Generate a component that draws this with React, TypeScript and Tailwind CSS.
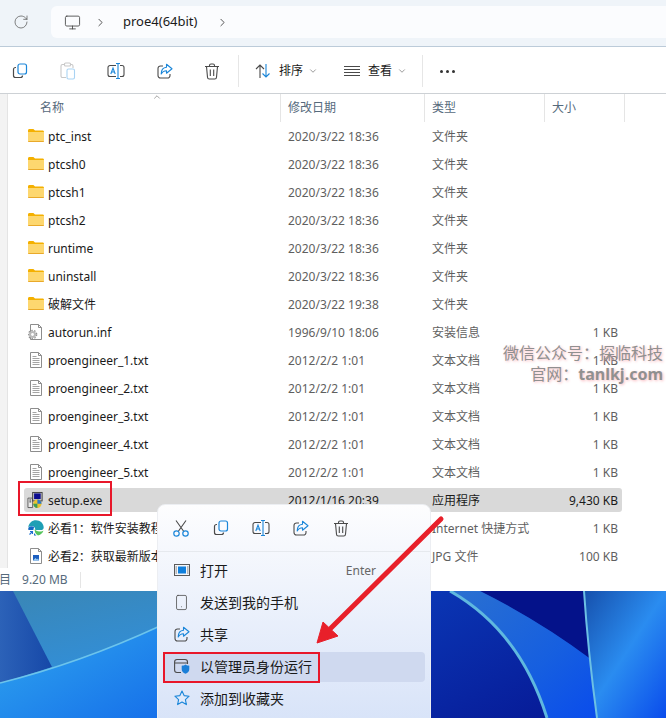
import { Monitor, RotateCw, ChevronRight, ChevronDown, ChevronUp, Smartphone } from 'lucide-react';

type Kind = 'folder' | 'inf' | 'txt' | 'exe' | 'edge' | 'jpg';
type Row = { name: string; date: string; type: string; size: string; kind: Kind };

const rows: Row[] = [
  { name: 'ptc_inst', date: '2020/3/22 18:36', type: '文件夹', size: '', kind: 'folder' },
  { name: 'ptcsh0', date: '2020/3/22 18:36', type: '文件夹', size: '', kind: 'folder' },
  { name: 'ptcsh1', date: '2020/3/22 18:36', type: '文件夹', size: '', kind: 'folder' },
  { name: 'ptcsh2', date: '2020/3/22 18:36', type: '文件夹', size: '', kind: 'folder' },
  { name: 'runtime', date: '2020/3/22 18:36', type: '文件夹', size: '', kind: 'folder' },
  { name: 'uninstall', date: '2020/3/22 18:36', type: '文件夹', size: '', kind: 'folder' },
  { name: '破解文件', date: '2020/3/22 19:38', type: '文件夹', size: '', kind: 'folder' },
  { name: 'autorun.inf', date: '1996/9/10 18:06', type: '安装信息', size: '1 KB', kind: 'inf' },
  { name: 'proengineer_1.txt', date: '2012/2/2 1:01', type: '文本文档', size: '1 KB', kind: 'txt' },
  { name: 'proengineer_2.txt', date: '2012/2/2 1:01', type: '文本文档', size: '1 KB', kind: 'txt' },
  { name: 'proengineer_3.txt', date: '2012/2/2 1:01', type: '文本文档', size: '1 KB', kind: 'txt' },
  { name: 'proengineer_4.txt', date: '2012/2/2 1:01', type: '文本文档', size: '1 KB', kind: 'txt' },
  { name: 'proengineer_5.txt', date: '2012/2/2 1:01', type: '文本文档', size: '1 KB', kind: 'txt' },
  { name: 'setup.exe', date: '2012/1/16 20:39', type: '应用程序', size: '9,430 KB', kind: 'exe' },
  { name: '必看1：软件安装教程', date: '', type: 'Internet 快捷方式', size: '1 KB', kind: 'edge' },
  { name: '必看2：获取最新版本', date: '', type: 'JPG 文件', size: '100 KB', kind: 'jpg' },
];

function FileIcon({ kind }: { kind: Kind }) {
  if (kind === 'folder') {
    return (
      <svg width="16" height="16" viewBox="0 0 16 16" className="-translate-y-px">
        <path d="M0 3.500C0 2.700.6 2 1.400 2h4l1.600 1.600h7.600c.8 0 1.400.6 1.400 1.400v1H0z" fill="#f4b000" />
        <path d="M0 5h16v8.600c0 .8-.6 1.400-1.400 1.400H1.400C.6 15 0 14.400 0 13.600z" fill="#fdd76f" />
        <path d="M0 14h16v.2c0 .5-.5.8-1.400.8H1.400C.5 15 0 14.700 0 14.200z" fill="#e9a92a" />
      </svg>
    );
  }
  if (kind === 'txt' || kind === 'inf') {
    return (
      <svg width="16" height="16" viewBox="0 0 16 16">
        <path d="M2.500.5h8l3 3v12h-11z" fill="#fff" stroke="#8d8d8d" />
        <path d="M10.500.5v3h3" fill="none" stroke="#8d8d8d" />
        {kind === 'txt' ? (
          <path d="M4.500 4.500h4M4.500 6.500h7M4.500 8.500h7M4.500 10.500h7M4.500 12.500h7" stroke="#a5a5a5" />
        ) : (
          <>
            <circle cx="4.500" cy="10.500" r="3.600" fill="#b9b9b9" />
            <circle cx="4.500" cy="10.500" r="1.400" fill="#fff" />
            <circle cx="4.500" cy="10.500" r="4.200" fill="none" stroke="#8f8f8f" strokeWidth="1.200" strokeDasharray="1.500 1.500" />
          </>
        )}
      </svg>
    );
  }
  if (kind === 'exe') {
    return (
      <svg width="18" height="18" viewBox="0 0 18 18" className="-ml-px">
        <path d="M1 7h5v10H1z" fill="#e9e9e9" stroke="#5a5a5a" />
        <path d="M2.500 9h2M2.500 11h2" stroke="#333" />
        <rect x="6" y="1" width="10" height="9" fill="#c9c9c9" stroke="#3e3e3e" />
        <rect x="7.500" y="2" width="7" height="6" fill="#0c0c8f" />
        <circle cx="11" cy="13" r="4.400" fill="#e9c22f" />
        <path d="M11 8.600A4.400 4.400 0 0 1 15.400 13H11z" fill="#2d78c8" />
        <path d="M6.600 13H11v4.400A4.400 4.400 0 0 1 6.600 13z" fill="#3d9c55" />
      </svg>
    );
  }
  if (kind === 'edge') {
    return (
      <svg width="16" height="16" viewBox="0 0 16 16">
        <path d="M.3 7.500C.8 3 4 .3 8 .3c4.300 0 7.700 3.200 7.700 7.200 0 1.500-1 2.600-2.800 2.600H7.300c0-2.800-1.500-4.200-3.500-4.200-1.600 0-2.800.6-3.500 1.600z" fill="#1f9fb5" />
        <path d="M10 15.500c3-.7 4.800-2.700 5.500-5-1 .9-2.300 1.100-4 1-2.500 0-4.200-1-4.700-2.700-.6 2.800.8 5.600 3.200 6.700z" fill="#55c45c" />
        <path d="M.3 8c-.3 3.400 2 6.800 5.200 7.400 1 .2 2 .2 3 0-2.300-1.200-3.500-4-3-6.200.2-1 .5-1.600.9-2.100C4.500 5.900 1.500 6 .3 8z" fill="#1468c4" />
        <rect x="0" y="10" width="6" height="6" fill="#fff" />
        <path d="M1.500 14.500l2.500-2.500M2 11.500h2.500V14" fill="none" stroke="#1d6fd0" strokeWidth="1.100" />
      </svg>
    );
  }
  return (
    <svg width="16" height="16" viewBox="0 0 16 16">
      <path d="M2.500.5h8l3 3v12h-11z" fill="#fff" stroke="#8d8d8d" />
      <path d="M10.500.5v3h3" fill="none" stroke="#8d8d8d" />
      <rect x="5" y="7" width="6" height="5.500" fill="#1d5fc0" />
      <path d="M5 12.500l2.500-2.500 1.500 1.500 1-1 1 2z" fill="#9fd2f5" />
    </svg>
  );
}

function CopyIcon() {
  return (
    <svg width="16" height="16" viewBox="0 0 16 16" fill="none">
      <rect x="6" y="1" width="8.500" height="10" rx="2" stroke="#1a86d9" strokeWidth="1.200" />
      <path d="M4 4.500h-.5a2 2 0 0 0-2 2v6a2 2 0 0 0 2 2h5a2 2 0 0 0 2-2V13" stroke="#4a4a4a" strokeWidth="1.200" />
    </svg>
  );
}

function PasteIcon() {
  return (
    <svg width="16" height="18" viewBox="0 0 16 18" fill="none">
      <path d="M5 2.500H2.500a1.500 1.500 0 0 0-1.500 1.500v10a1.500 1.500 0 0 0 1.500 1.500H6" stroke="#c8c8c8" strokeWidth="1.100" />
      <path d="M10 2.500h1.500A1.500 1.500 0 0 1 13 4v2" stroke="#c8c8c8" strokeWidth="1.100" />
      <rect x="4.500" y="1" width="6" height="3" rx="1" stroke="#c8c8c8" strokeWidth="1.100" />
      <rect x="7" y="7" width="7.500" height="10" rx="1.500" stroke="#a9d3f3" strokeWidth="1.100" />
    </svg>
  );
}

function RenameIcon() {
  return (
    <svg width="18" height="16" viewBox="0 0 18 16" fill="none" className="shrink-0">
      <path d="M9 2.500H3a2 2 0 0 0-2 2v7a2 2 0 0 0 2 2h6M13 2.500h2a2 2 0 0 1 2 2v7a2 2 0 0 1-2 2h-2" stroke="#4a4a4a" strokeWidth="1.100" />
      <path d="M9 .5h4M11 .5v15M9 15.500h4" stroke="#1a86d9" strokeWidth="1.100" />
      <path d="M3.800 11L6 5l2.200 6M4.600 9h2.800" stroke="#1a86d9" strokeWidth="1.100" />
    </svg>
  );
}

function ShareIcon() {
  return (
    <svg width="16" height="16" viewBox="0 0 16 16" fill="none">
      <path d="M6 3H3.500A2.500 2.500 0 0 0 1 5.500v7A2.500 2.500 0 0 0 3.500 15h7a2.500 2.500 0 0 0 2.500-2.500V11" stroke="#4a4a4a" strokeWidth="1.100" />
      <path d="M9.500 1.200L15 5.700l-5.500 4.500V7.800C7 7.800 5.200 9 4.200 11c0-4 2-6.500 5.300-6.800z" stroke="#1a86d9" strokeWidth="1.100" strokeLinejoin="round" />
    </svg>
  );
}

function TrashIcon() {
  return (
    <svg width="16" height="17" viewBox="0 0 16 17" fill="none" stroke="#4a4a4a" strokeWidth="1.100">
      <path d="M1 3.500h14M5.500 3.500V2.500a1.500 1.500 0 0 1 1.500-1.500h2a1.500 1.500 0 0 1 1.500 1.500v1" />
      <path d="M2.500 3.500l1 10.800a1.800 1.800 0 0 0 1.800 1.700h5.400a1.800 1.800 0 0 0 1.800-1.700l1-10.800" />
      <path d="M6.300 6.500v6.500M9.700 6.500v6.500" />
    </svg>
  );
}

function CutIcon() {
  return (
    <svg width="16" height="17" viewBox="0 0 16 17" fill="none">
      <path d="M3 .5L10.800 11.500M13 .5L5.200 11.500" stroke="#4a4a4a" strokeWidth="1.100" />
      <circle cx="3.500" cy="13.500" r="2.700" stroke="#1a86d9" strokeWidth="1.200" />
      <circle cx="12.500" cy="13.500" r="2.700" stroke="#1a86d9" strokeWidth="1.200" />
    </svg>
  );
}

function OpenIcon() {
  return (
    <svg width="16" height="12" viewBox="0 0 16 12">
      <rect x=".5" y=".5" width="15" height="11" fill="#f4f6fa" stroke="#5a5a5a" />
      <rect x="4" y="2.500" width="8" height="7" fill="#0f7fdc" />
      <path d="M1.500 3h1.500M1.500 5h1.500M1.500 7h1.500M1.500 9h1.500M13 3h1.500M13 5h1.500M13 7h1.500M13 9h1.500" stroke="#7a7a7a" />
    </svg>
  );
}

function ShieldIcon() {
  return (
    <svg width="16" height="16" viewBox="0 0 16 16" fill="none">
      <path d="M7 14.500H3A2.500 2.500 0 0 1 .6 12V4A2.500 2.500 0 0 1 3 1.500h8A2.500 2.500 0 0 1 13.500 4v2M.6 5h13" stroke="#4a4a4a" strokeWidth="1.100" />
      <path d="M11.500 6.500c1 .8 2.200 1.200 3.800 1.200v3.500c0 2.300-1.500 3.800-3.800 4.600-2.300-.8-3.800-2.300-3.800-4.600V7.700c1.600 0 2.800-.4 3.800-1.200z" fill="#1a7fd8" />
    </svg>
  );
}

function StarIcon() {
  return (
    <svg width="16" height="16" viewBox="0 0 16 16" fill="none">
      <path d="M8 1l2.100 4.600 5 .6-3.700 3.400 1 5L8 12.100l-4.400 2.500 1-5L.9 6.200l5-.6z" fill="#dfeafb" stroke="#1a86d9" strokeWidth="1.100" strokeLinejoin="round" />
    </svg>
  );
}

function SortIcon() {
  return (
    <svg width="16" height="16" viewBox="0 0 16 16" fill="none" strokeWidth="1.100">
      <path d="M5 15V2M1 6l4-4 4 4" stroke="#4a4a4a" />
      <path d="M11 1v13M7.500 10.500l3.500 3.500 3.500-3.500" stroke="#1a86d9" />
    </svg>
  );
}

const menuItems = [
  { label: '打开', icon: <OpenIcon />, hint: 'Enter' },
  { label: '发送到我的手机', icon: <Smartphone size={17} strokeWidth={1.1} color="#4a4a4a" /> },
  { label: '共享', icon: <ShareIcon /> },
  { label: '以管理员身份运行', icon: <ShieldIcon />, active: true },
  { label: '添加到收藏夹', icon: <StarIcon /> },
];

export default function App() {
  return (
    <div className="relative flex h-[718px] w-[666px] flex-col overflow-hidden bg-white font-['Noto_Sans','Noto_Sans_CJK_SC',sans-serif] text-[12px] text-[#1a1a1a]">
      {/* address bar */}
      <div className="flex h-[47px] shrink-0 items-start border-b border-[#bccbd9] bg-[#eff4f9] pl-[13px] pt-[6px]">
        <div className="flex h-8 items-center">
          <RotateCw size={16} strokeWidth={1.1} color="#555" />
        </div>
        <div className="ml-[22px] flex h-8 flex-1 items-center rounded-l-md bg-[#fbfcfe] pl-[13px] text-[13px]">
          <Monitor size={17} strokeWidth={1.2} color="#444" />
          <ChevronRight size={13} strokeWidth={1.5} color="#333" className="ml-[13px]" />
          <span className="ml-4">proe4(64bit)</span>
          <ChevronRight size={13} strokeWidth={1.5} color="#333" className="ml-[19px]" />
        </div>
      </div>

      {/* command bar */}
      <div className="flex h-[47px] shrink-0 items-center border-b border-[#cdd1d5] pl-3 pt-[2px]">
        <div className="flex w-[218px] items-center justify-between pr-[10px]">
          <CopyIcon />
          <PasteIcon />
          <RenameIcon />
          <ShareIcon />
          <TrashIcon />
        </div>
        <div className="ml-2 h-8 w-px bg-[#e6e6e6]" />
        <div className="ml-4 flex items-center">
          <SortIcon />
          <span className="ml-2 text-[12px]">排序</span>
          <ChevronDown size={10} color="#888" className="ml-[5px]" />
        </div>
        <div className="ml-[26px] flex items-center">
          <svg width="16" height="12" viewBox="0 0 16 12" stroke="#4a4a4a">
            <path d="M0 1.500h16M0 4.500h16M0 7.500h16M0 10.500h16" />
          </svg>
          <span className="ml-2 text-[12px]">查看</span>
          <ChevronDown size={10} color="#888" className="ml-[5px]" />
        </div>
        <div className="ml-[15px] h-8 w-px bg-[#e6e6e6]" />
        <div className="ml-[17px] flex gap-[3px]">
          <span className="size-[3px] rounded-full bg-[#333]" />
          <span className="size-[3px] rounded-full bg-[#333]" />
          <span className="size-[3px] rounded-full bg-[#333]" />
        </div>
      </div>

      {/* file area */}
      <div className="flex min-h-0 flex-1">
        <div className="w-2 shrink-0 border-r border-[#e4e4e4] bg-[#f3f3f3]" />
        <div className="relative min-w-0 flex-1">
          <ChevronUp size={10} strokeWidth={1.4} color="#666" className="absolute left-[144px] top-[-2px]" />
          <div className="grid h-7 grid-cols-[273px_144px_120px_80px] text-[#566a7c]">
            <div className="flex items-center border-r border-[#e5e5e5] pl-8"><span>名称</span></div>
            <div className="flex items-center border-r border-[#e5e5e5] pl-[7px]"><span>修改日期</span></div>
            <div className="flex items-center border-r border-[#e5e5e5] pl-[7px]"><span>类型</span></div>
            <div className="flex items-center border-r border-[#e5e5e5] pl-[7px]"><span>大小</span></div>
          </div>
          {rows.map((row) => (
            <div key={row.name} className="flex h-7 items-center">
              <div
                className={`ml-4 grid h-6 w-[598px] grid-cols-[264px_144px_1fr] items-center rounded-[3px] pr-1 ${
                  row.kind === 'exe' ? 'bg-[#d9d9d9] text-[#1a1a1a]' : 'text-[#5f5f5f]'
                }`}
              >
                <div className="flex items-center gap-1 pl-1 text-[#1a1a1a]">
                  <span className="flex size-4 items-center justify-center">
                    <FileIcon kind={row.kind} />
                  </span>
                  <span className="translate-y-px">{row.name}</span>
                </div>
                <span className="translate-y-px">{row.date}</span>
                <div className="flex translate-y-px items-center justify-between">
                  <span>{row.type}</span>
                  <span>{row.size}</span>
                </div>
              </div>
            </div>
          ))}
        </div>
      </div>

      {/* status bar */}
      <div className="z-0 flex h-[23px] shrink-0 items-center bg-white text-[#566a7c]">
        <span className="-ml-[1px]">目</span>
        <span className="ml-[11px]">9.20 MB</span>
        <div className="ml-3 h-4 w-px bg-[#e5e5e5]" />
      </div>

      {/* wallpaper */}
      <svg className="block h-[127px] w-[666px] shrink-0" viewBox="0 0 666 127">
        <defs>
          <linearGradient id="sky" x1="0" y1="0" x2="0.3" y2="1">
            <stop offset="0" stopColor="#3a86b4" />
            <stop offset="1" stopColor="#2f92e6" />
          </linearGradient>
          <linearGradient id="wedge" x1="0" y1="0" x2="1" y2="0">
            <stop offset="0" stopColor="#2c62b8" />
            <stop offset="1" stopColor="#1648a8" />
          </linearGradient>
          <linearGradient id="lake" x1="0" y1="0" x2="1" y2="1">
            <stop offset="0" stopColor="#2fa6ee" />
            <stop offset="1" stopColor="#1670ea" />
          </linearGradient>
          <linearGradient id="swoosh" x1="0" y1="0" x2="1" y2="1">
            <stop offset="0" stopColor="#2a70d0" />
            <stop offset="0.6" stopColor="#165fe0" />
            <stop offset="1" stopColor="#0a4cec" />
          </linearGradient>
          <linearGradient id="side" x1="0" y1="0" x2="1" y2="1">
            <stop offset="0" stopColor="#1650ac" />
            <stop offset="0.5" stopColor="#2a8cf0" />
            <stop offset="1" stopColor="#0a4cec" />
          </linearGradient>
          <linearGradient id="deep" x1="0" y1="0" x2="1" y2="1">
            <stop offset="0" stopColor="#0a36b4" />
            <stop offset="1" stopColor="#06128e" />
          </linearGradient>
        </defs>
        <rect width="160" height="127" fill="url(#sky)" />
        <path d="M0 0H13L52 76Q25 85 0 92Z" fill="url(#wedge)" />
        <path d="M0 92Q80 72 160 35V127H0Z" fill="url(#lake)" />
        <path d="M0 92Q80 72 160 35" fill="none" stroke="#6cc4ec" strokeWidth="1.500" />
        <rect x="430" width="236" height="127" fill="url(#deep)" />
        <path d="M480 0Q540 30 592 69L584 0Z" fill="#04128a" />
        <path d="M450 0H480Q540 30 592 69L597 127H547Q520 40 450 0Z" fill="url(#swoosh)" />
        <path d="M450 0Q520 40 547 127" fill="none" stroke="#5fb8df" strokeWidth="3" />
        <path d="M584 0H666V127H597Q588 60 584 0Z" fill="url(#side)" />
        <path d="M584 0Q588 60 597 127" fill="none" stroke="#6cc0e4" strokeWidth="2" />
      </svg>

      {/* context menu */}
      <div className="absolute left-[157px] top-[504px] h-[230px] w-[274px] rounded-t-lg border border-[#eceef2] bg-gradient-to-b from-[#fdfdfe] to-[#d6e2f8]">
        <div className="flex h-[47px] items-center gap-6 border-b border-[#e6e9ee] pl-[15px]">
          <span className="flex w-4 justify-center"><CutIcon /></span>
          <span className="flex w-4 justify-center"><CopyIcon /></span>
          <span className="flex w-4 justify-center"><RenameIcon /></span>
          <span className="flex w-4 justify-center"><ShareIcon /></span>
          <span className="flex w-4 justify-center"><TrashIcon /></span>
        </div>
        <div className="flex flex-col px-[5px] pt-[3px] text-[14px]">
          {menuItems.map((item) => (
            <div key={item.label} className="h-8 py-px">
              <div className={`flex h-[30px] items-center ${item.active ? 'rounded bg-[#cfd9ef]' : ''}`}>
                <span className="flex w-[37px] -translate-y-px items-center justify-center">{item.icon}</span>
                <span className="flex-1 -translate-y-px text-[#1a1a1a]">{item.label}</span>
                {item.hint && <span className="mr-[49px] text-[12px] text-[#666]">{item.hint}</span>}
              </div>
            </div>
          ))}
        </div>
      </div>

      {/* annotations */}
      <div className="absolute left-[18px] top-[481px] h-[35px] w-[94px] border-2 border-[#e8172a]" />
      <div className="absolute left-[163px] top-[652px] h-[31px] w-[157px] border-2 border-[#e8172a]" />
      <svg className="pointer-events-none absolute left-0 top-0" width="666" height="718">
        <path d="M441 519L331 628" stroke="#e8202a" strokeWidth="5" strokeLinecap="round" />
        <path d="M317 643L323 622L338 636Z" fill="#e8202a" stroke="#e8202a" strokeWidth="1" />
      </svg>

      {/* watermark */}
      <div className="absolute right-[3px] top-[343px] flex flex-col items-end text-[16px] leading-[21px] text-[#909090] [text-shadow:1px_1px_3px_#f9b7bd]">
        <span>微信公众号：探临科技</span>
        <span>
          官网：<span className="font-bold">tanlkj.com</span>
        </span>
      </div>
    </div>
  );
}
